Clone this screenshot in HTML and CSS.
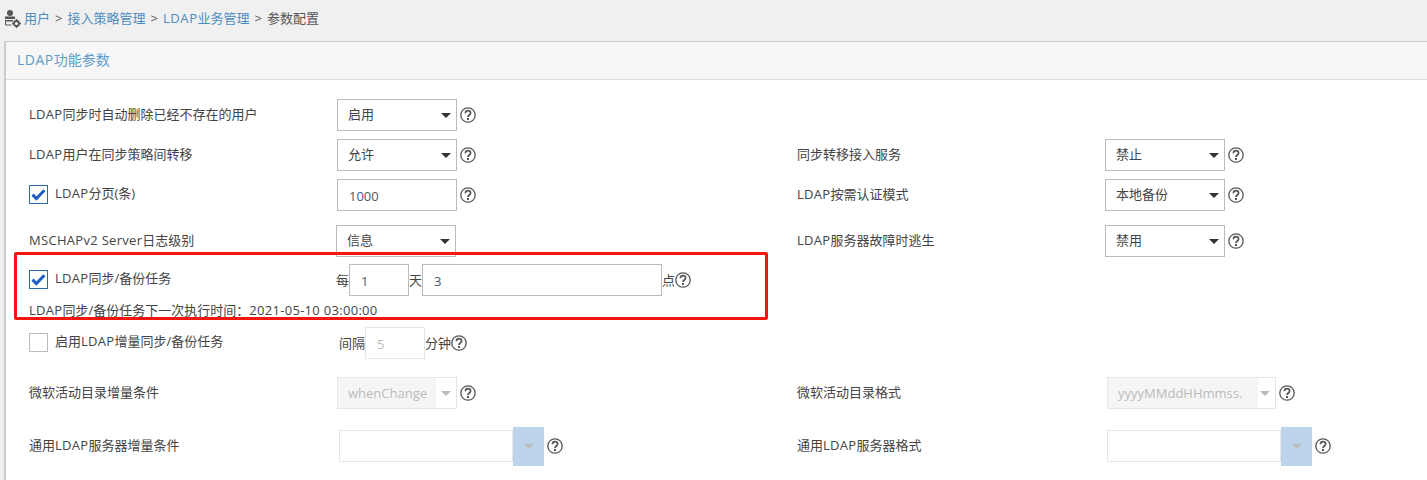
FILE: index.html
```html
<!DOCTYPE html>
<html lang="zh-CN">
<head>
<meta charset="utf-8">
<title>参数配置</title>
<link rel="stylesheet" href="styles.css">
</head>
<body>
<svg class="defs" width="0" height="0" aria-hidden="true">
  <symbol id="help" viewBox="0 0 16 16">
    <circle cx="8" cy="8" r="7.2" fill="none" stroke="#555" stroke-width="1.3"/>
    <path d="M5.4 6.2C5.4 4.6 6.6 3.7 8 3.7c1.5 0 2.6.9 2.6 2.3 0 2-2.6 2-2.6 4" fill="none" stroke="#555" stroke-width="1.7"/>
    <rect x="7" y="11" width="2" height="2" fill="#555"/>
  </symbol>
  <symbol id="check" viewBox="0 0 17 17">
    <path d="M2.5 8.6l3.9 3.9 8-8.2" fill="none" stroke="#1d5fc4" stroke-width="3"/>
  </symbol>
</svg>
<nav class="crumbs">
  <svg class="crumb-icon" width="20" height="20" viewBox="0 0 20 20">
    <circle cx="6" cy="5" r="3" fill="#555"/>
    <path d="M1 8.5h10v2.5H1zM1 12h8v1.5H1z" fill="#555"/>
    <path d="M1.5 13.5v3.5h6" fill="none" stroke="#555" stroke-width="1"/>
    <circle cx="12.5" cy="15.5" r="2.5" fill="none" stroke="#555" stroke-width="1.8"/>
    <path d="M12.5 11v2M12.5 18v2M8 15.5h2M15 15.5h2" stroke="#555" stroke-width="1.4"/>
  </svg>
  <a>用户</a><i>&gt;</i><a>接入策略管理</a><i>&gt;</i><a><span class="lat">LDAP</span>业务管理</a><i>&gt;</i><span>参数配置</span>
</nav>
<main class="panel">
  <h1 class="panel-title"><span class="lat">LDAP</span>功能参数</h1>
  <div class="form">
    <div class="row r1">
      <label class="label"><span class="lat">LDAP</span>同步时自动删除已经不存在的用户</label>
      <div class="field"><div class="select s120">启用<b class="caret"></b></div><svg class="help"><use href="#help"/></svg></div>
    </div>
    <div class="row r2">
      <label class="label"><span class="lat">LDAP</span>用户在同步策略间转移</label>
      <div class="field"><div class="select s120">允许<b class="caret"></b></div><svg class="help"><use href="#help"/></svg></div>
      <label class="label">同步转移接入服务</label>
      <div class="field"><div class="select s120">禁止<b class="caret"></b></div><svg class="help"><use href="#help"/></svg></div>
    </div>
    <div class="row r3">
      <label class="label check-label"><span class="box on"><svg width="17" height="17"><use href="#check"/></svg></span><span class="lat">LDAP</span>分页(条)</label>
      <div class="field"><div class="input s120">1000</div><svg class="help"><use href="#help"/></svg></div>
      <label class="label"><span class="lat">LDAP</span>按需认证模式</label>
      <div class="field"><div class="select s120">本地备份<b class="caret"></b></div><svg class="help"><use href="#help"/></svg></div>
    </div>
    <div class="row r4">
      <label class="label"><span class="lat">MSCHAPv2&nbsp;Server</span>日志级别</label>
      <div class="field shift-left"><div class="select s120">信息<b class="caret"></b></div></div>
      <label class="label"><span class="lat">LDAP</span>服务器故障时逃生</label>
      <div class="field"><div class="select s120">禁用<b class="caret"></b></div><svg class="help"><use href="#help"/></svg></div>
    </div>
    <div class="row r5">
      <label class="label check-label"><span class="box on"><svg width="17" height="17"><use href="#check"/></svg></span><span class="lat">LDAP</span>同步/备份任务</label>
      <div class="field shift-left"><span class="unit">每</span><div class="input s60">1</div><span class="unit">天</span><div class="input s240">3</div><span class="unit">点</span><svg class="help tight"><use href="#help"/></svg></div>
    </div>
    <p class="next-run"><span class="lat">LDAP</span>同步/备份任务下一次执行时间：<span class="lat">2021-05-10 03:00:00</span></p>
    <div class="row r7">
      <label class="label check-label"><span class="box"></span>启用<span class="lat">LDAP</span>增量同步/备份任务</label>
      <div class="field inset"><span class="unit">间隔</span><div class="input s60 off">5</div><span class="unit">分钟</span><svg class="help tight"><use href="#help"/></svg></div>
    </div>
    <div class="row r8">
      <label class="label">微软活动目录增量条件</label>
      <div class="field"><div class="select s120 off"><span class="off-text w93">whenChange</span><b class="caret"></b></div><svg class="help"><use href="#help"/></svg></div>
      <label class="label">微软活动目录格式</label>
      <div class="field shift-right"><div class="select s169 off"><span class="off-text w147">yyyyMMddHHmmss.</span><b class="caret"></b></div><svg class="help"><use href="#help"/></svg></div>
    </div>
    <div class="row r9">
      <label class="label">通用<span class="lat">LDAP</span>服务器增量条件</label>
      <div class="field shift-combo"><div class="combo"></div><div class="combo-btn"><b class="caret"></b></div><svg class="help"><use href="#help"/></svg></div>
      <label class="label">通用<span class="lat">LDAP</span>服务器格式</label>
      <div class="field shift-right"><div class="combo"></div><div class="combo-btn"><b class="caret"></b></div><svg class="help"><use href="#help"/></svg></div>
    </div>
    <div class="callout"></div>
  </div>
</main>
</body>
</html>
```
FILE: styles.css
```css
* { box-sizing: border-box; }
html, body { margin: 0; height: 480px; overflow: hidden; }
body {
  background: #f0f0f0;
  color: #444;
  font: 13px/18px "Open Sans", "Noto Sans CJK SC", sans-serif;
  padding: 8px 0 0 4px;
}
.defs { position: absolute; }
.lat { letter-spacing: .3px; }

.crumbs { display: flex; align-items: center; height: 20px; color: #555; margin-bottom: 13px; }
.crumb-icon { flex: none; }
.crumbs a { color: #4d8dc0; }
.crumbs i { font-style: normal; margin: 0 5px; color: #555; }
.crumbs span { color: #555; }
.crumbs .lat { color: inherit; letter-spacing: .6px; }

.panel { background: #fff; border: 1px solid #ccc; border-left-width: 2px; border-right: 0; height: 460px; }
.panel-title {
  margin: 0;
  height: 38px;
  padding-left: 11px;
  background: #f7f7f7;
  border-bottom: 1px solid #ddd;
  color: #5f9cc9;
  font-size: 14px;
  font-weight: 400;
  line-height: 35px;
}
.panel-title .lat { letter-spacing: .5px; }

.form { position: relative; padding-left: 23px; }
.row { display: grid; grid-template-columns: 308px 460px 308px auto; height: 32px; }
.label { display: flex; align-items: center; padding-bottom: 2px; }
.field { display: flex; align-items: center; }
.shift-left { margin-left: -1px; }
.shift-right { margin-left: 2px; }
.shift-combo { margin-left: 2px; }
.inset { margin-left: 2px; }

.r1 { margin-top: 19px; }
.r2 { margin-top: 8px; }
.r3 { margin-top: 8px; }
.r4 { margin-top: 14px; }
.r5 { margin-top: 7px; }
.r7 { margin-top: 8px; }
.r8 { margin-top: 18px; }
.r9 { margin-top: 18px; height: 40px; }

.select, .input {
  position: relative;
  height: 32px;
  border: 1px solid #bbb;
  padding-left: 10px;
  line-height: 28px;
  background: #fff;
  flex: none;
}
.s120 { width: 120px; }
.s60 { width: 60px; }
.s240 { width: 240px; }
.s169 { width: 169px; }
.input { padding-left: 11px; line-height: 32px; color: #4a5a6a; }

.caret {
  position: absolute;
  right: 5px;
  top: 13px;
  width: 0;
  height: 0;
  border-left: 5px solid transparent;
  border-right: 5px solid transparent;
  border-top: 5px solid #333;
}
.select.off, .input.off { border-color: #e6e6e6; color: #bbb; }
.select.off { padding-left: 0; overflow: hidden; }
.select.off .caret { border-top-color: #bbb; }
.off-text { display: block; height: 30px; line-height: 30px; padding-left: 10px; background: #f5f5f5; white-space: nowrap; overflow: hidden; }
.w93 { width: 98px; }
.w147 { width: 150px; }

.help { width: 16px; height: 16px; margin-left: 3px; flex: none; }
.help.tight { margin-left: 0; }
.unit { flex: none; }

.check-label { height: 32px; align-items: flex-start; line-height: 28px; padding-bottom: 0; }
.box {
  flex: none;
  width: 19px;
  height: 19px;
  margin: 6px 7px 0 0;
  border: 1px solid #bbb;
  background: #fff;
  display: flex;
  align-items: center;
  justify-content: center;
}
.box.on { border-color: #2b6ca8; }

.next-run { margin: 5px 0 0; height: 18px; white-space: nowrap; }

.combo { width: 174px; height: 32px; border: 1px solid #e6e6e6; background: #fff; flex: none; }
.combo-btn { position: relative; width: 31px; height: 39px; background: #bcd4ea; flex: none; }
.combo-btn .caret { top: 17px; right: 10px; border-top-color: #bbb; }
.r9 .field { align-items: flex-start; }
.r9 .combo { margin-top: 3px; }
.r9 .help { margin-top: 11px; }
.r9 .label { height: 38px; }

.callout {
  position: absolute;
  left: 8px;
  top: 153px;
  width: 754px;
  height: 68px;
  border: 3px solid #f5170d;
  border-radius: 2px;
  pointer-events: none;
}
```
